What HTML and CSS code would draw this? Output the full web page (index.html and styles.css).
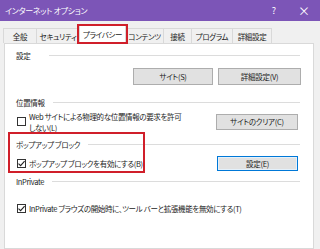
FILE: index.html
```html
<!DOCTYPE html>
<html lang="ja">
<head>
<meta charset="utf-8">
<link rel="stylesheet" href="styles.css">
</head>
<body>
<div class="window">
  <div class="titlebar">
    <span class="title">インターネット オプション</span>
    <span class="tb-btn help">?</span>
    <span class="tb-btn close">×</span>
  </div>
  <div class="tabs">
    <div class="tab t1">全般</div>
    <div class="tab t2">セキュリティ</div>
    <div class="tab t3 active">プライバシー<span class="hl hl-tab"></span></div>
    <div class="tab t4">コンテンツ</div>
    <div class="tab t5">接続</div>
    <div class="tab t6">プログラム</div>
    <div class="tab t7">詳細設定</div>
  </div>
  <div class="panel">
    <div class="group g1">
      <div class="legend"><span>設定</span><i class="rule"></i></div>
      <div class="row r1">
        <button class="btn b-site">サイト(S)</button>
        <button class="btn b-adv">詳細設定(V)</button>
      </div>
    </div>
    <div class="group g2">
      <div class="legend"><span>位置情報</span><i class="rule"></i></div>
      <div class="row r2">
        <label class="check"><span class="box"></span><span class="ctext">Web サイトによる物理的な位置情報の要求を許可<br>しない(L)</span></label>
        <button class="btn b-clear">サイトのクリア(C)</button>
      </div>
    </div>
    <div class="group g3">
      <div class="legend"><span>ポップアップ ブロック</span><i class="rule"></i></div>
      <div class="row r3">
        <label class="check"><span class="box checked"><svg viewBox="0 0 9 9" width="9" height="9"><path d="M1.5 4.6 L3.6 6.7 L7.6 2.2" fill="none" stroke="#222" stroke-width="1.1"/></svg></span><span class="ctext">ポップアップ ブロックを有効にする(B)</span></label>
        <button class="btn b-set focus">設定(E)</button>
      </div>
      <span class="hl hl-popup"></span>
    </div>
    <div class="group g4">
      <div class="legend"><span>InPrivate</span><i class="rule"></i></div>
      <div class="row r4">
        <label class="check"><span class="box checked"><svg viewBox="0 0 9 9" width="9" height="9"><path d="M1.5 4.6 L3.6 6.7 L7.6 2.2" fill="none" stroke="#222" stroke-width="1.1"/></svg></span><span class="ctext">InPrivate ブラウズの開始時に、ツール バーと拡張機能を無効にする(T)</span></label>
      </div>
    </div>
  </div>
</div>
</body>
</html>
```
FILE: styles.css
```css
* { box-sizing: border-box; }
html, body { margin: 0; padding: 0; }
body {
  width: 320px; height: 249px; overflow: hidden;
  background: #f0f0f0;
  font-family: "Noto Sans CJK JP", "Noto Sans", sans-serif;
  font-feature-settings: "palt";
  font-size: 7.5px;
  letter-spacing: -0.35px;
  color: #1b1b1b;
}
.window { width: 320px; height: 249px; display: flex; flex-direction: column; }
.titlebar {
  height: 21px; background: #7c55b7; color: #fff;
  display: flex; align-items: center; padding-left: 5px; flex: none;
}
.title { font-size: 8px; flex: 1; letter-spacing: -0.3px; }
.tb-btn { width: 30px; text-align: center; font-size: 9px; letter-spacing: 0; }
.close { font-size: 12px; margin-right: 1px; }

.tabs {
  display: flex; align-items: flex-end; height: 22px; padding-left: 3px; flex: none;
  position: relative; z-index: 2;
}
.tab {
  height: 15px; border: 1px solid #d9d9d9; border-bottom: none; margin-right: -1px;
  background: #f0f0f0; display: flex; align-items: center; justify-content: center;
  color: #222; white-space: nowrap;
}
.t1 { width: 34px; }
.t2 { width: 44px; }
.t3 { width: 47px; }
.t4 { width: 39px; }
.t5 { width: 29px; }
.t6 { width: 42px; }
.t7 { width: 40px; }
.tab.active {
  background: #fff; position: relative; margin-bottom: -1px; height: 19px;
  border-color: #d9d9d9; align-items: flex-start; padding-top: 3px;
}
.hl { position: absolute; border: 2px solid #d01f2a; pointer-events: none; }
.hl-tab { left: -3px; top: -2px; width: 51px; height: 20px; }

.panel {
  flex: 1; margin: 0 6px 0 4px; background: #fff; border: 1px solid #d9d9d9;
  padding: 6px 13px 0 11px; position: relative;
}
.group { position: relative; }
.legend { display: flex; align-items: center; height: 10px; }
.legend span { flex: none; }
.rule { flex: 1; height: 1px; background: #dcdcdc; margin-left: 8px; margin-top: 1px; }
.g1 .rule { margin-left: 19px; }
.row { display: flex; align-items: center; }
.r1 { justify-content: flex-end; margin-top: 8px; gap: 5px; margin-right: -1px; }
.g2 { margin-top: 12px; }
.r2 { margin-top: 4px; justify-content: space-between; }
.g3 { margin-top: 6px; }
.r3 { margin-top: 6px; justify-content: space-between; height: 16px; }
.g4 { margin-top: 5px; }
.r4 { margin-top: 17px; }

.btn {
  font-family: inherit; font-feature-settings: "palt"; font-size: 7.5px; letter-spacing: -0.3px; color: #222;
  background: #e1e1e1; border: 1px solid #adadad; height: 17px; padding: 0;
  display: flex; align-items: center; justify-content: center;
}
.b-site { width: 80px; }
.b-adv { width: 83px; }
.b-clear { width: 82px; height: 16px; margin-right: 2px; margin-top: -1px; }
.b-set { width: 81px; height: 15px; margin-right: 2px; }
.btn.focus { border: 1px solid #0078d7; box-shadow: inset 0 0 0 1px #e5f1fb; }

.check { display: flex; align-items: flex-start; }
.box {
  width: 9px; height: 9px; border: 1px solid #333; background: #fff; flex: none;
  margin-left: 1px; margin-right: 3px; margin-top: 1px; display: flex; align-items: center; justify-content: center;
}
.box svg { display: block; margin: -1px; }
.r2 .box { margin-top: 6px; }
.ctext { line-height: 11px; }
.hl-popup { left: -8px; top: -7px; width: 137px; height: 41px; }
```
